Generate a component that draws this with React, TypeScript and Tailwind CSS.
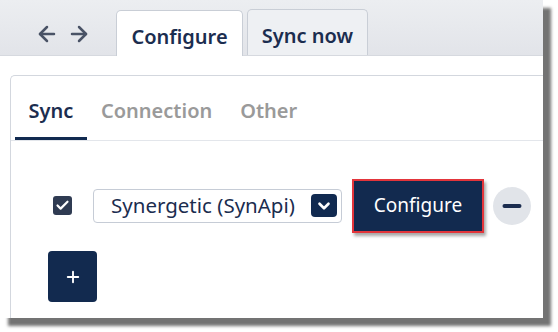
import { ArrowLeft, ArrowRight, Check, ChevronDown, Minus, Plus } from "lucide-react";

const font = { fontFamily: '"Noto Sans", "Open Sans", sans-serif' };

export default function App() {
  return (
    <div className="w-[558px] h-[332px] bg-white" style={font}>
      <div className="w-[543px] h-[318px] bg-white overflow-hidden shadow-[8px_8px_3px_rgba(0,0,0,0.55)] flex flex-col">
        {/* top strip */}
        <div className="h-[56px] bg-gradient-to-b from-[#eceef1] to-[#e2e4e9] flex items-end pl-[35px] border-b border-[#d6d9df]">
          <div className="flex items-center gap-[8px] h-[46px] pt-[4px] text-[#4a5366] mr-[25px]">
            <ArrowLeft size={24} strokeWidth={2.5} />
            <ArrowRight size={24} strokeWidth={2.5} />
          </div>
          <div className="h-[46px] w-[127px] pt-[6px] bg-white border border-b-0 border-[#c9ced6] rounded-t-[5px] flex items-center justify-center text-[20px] font-semibold text-[#1b2d4f] relative -mb-px">
            Configure
          </div>
          <div className="h-[46px] w-[121px] pt-[6px] ml-[4px] bg-[#eef0f3] border border-b-0 border-[#c9ced6] rounded-t-[5px] flex items-center justify-center text-[20px] font-semibold text-[#1b2d4f]">
            Sync now
          </div>
        </div>

        {/* panel */}
        <div className="flex-1 pt-[19px] pl-[10px]">
          <div className="h-full border-l border-t border-[#d3d7de] rounded-tl-[5px]">
            <div className="flex items-end h-[65px] border-b border-[#e3e6eb] pl-[4px] text-[20px] font-semibold">
              <div className="w-[72px] h-full flex items-center justify-center text-[#1b2d4f] border-b-[3px] border-[#112a50] pt-[8px]">
                Sync
              </div>
              <div className="h-full flex items-center pl-[14px] text-[#9a9a9a] pt-[5px]">Connection</div>
              <div className="h-full flex items-center pl-[28px] text-[#9a9a9a] pt-[5px]">Other</div>
            </div>

            <div className="flex items-center h-[55px] mt-[37px] pl-[42px]">
              <div className="w-[19px] h-[19px] rounded-[3px] bg-[#2f3b52] flex items-center justify-center text-white">
                <Check size={15} strokeWidth={3.5} />
              </div>
              <div className="ml-[21px] w-[249px] h-[34px] border border-[#c6ccd6] rounded-[4px] flex items-center justify-between pl-[17px] pr-[4px]">
                <span className="text-[20.5px] text-[#1b2d4f]">Synergetic (SynApi)</span>
                <span className="w-[26px] h-[23px] rounded-[4px] bg-[#112a50] flex items-center justify-center text-white">
                  <ChevronDown size={18} strokeWidth={3.5} />
                </span>
              </div>
              <div className="ml-[10px] w-[132px] h-[54px] border-2 border-[#e3353b] bg-[#122a4f] flex items-center justify-center text-white text-[19px] shadow-[2px_3px_3px_rgba(0,0,0,0.35)]">
                Configure
              </div>
              <div className="ml-[9px] w-[38px] h-[38px] rounded-full bg-[#e1e4e9] flex items-center justify-center text-[#1b2d4f]">
                <Minus size={26} strokeWidth={3.5} />
              </div>
            </div>

            <div className="mt-[18px] ml-[37px] w-[49px] h-[51px] rounded-[4px] bg-[#122a4f] flex items-center justify-center text-white">
              <Plus size={18} strokeWidth={2.5} />
            </div>
          </div>
        </div>
      </div>
    </div>
  );
}
